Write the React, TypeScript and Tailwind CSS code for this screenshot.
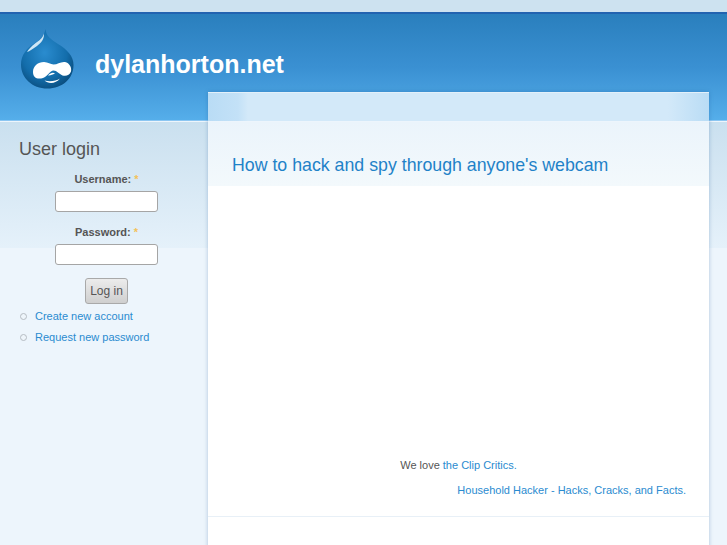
import React from "react";

function Logo() {
  return (
    <svg width="56" height="62" viewBox="19 27 56 62" className="shrink-0 mb-[12px]">
      <defs>
        <radialGradient id="d" cx="45%" cy="40%" r="65%">
          <stop offset="0%" stopColor="#2a8ccf" />
          <stop offset="65%" stopColor="#136dab" />
          <stop offset="100%" stopColor="#0a4c7c" />
        </radialGradient>
      </defs>
      <path d="M45.5 28 C46 35 51 38.5 58 43 C67 48.5 73.500 55 73.500 64 C73.500 78 62 87.500 47.500 87.500 C32 87.500 21 77 21 63.500 C21 54 27 47 34 42.500 C39.500 39 44 36 45.500 28 Z" fill="url(#d)" />
      <path d="M44 32.500 C43 37 38.500 40 35 42.500 C31 45.500 28.500 48.500 27 51 C29.500 50.500 33 47.500 37 45 C41 42 44.500 38 44 32.500 Z" fill="#cfe6f5" />
      <path d="M33 71 C33 65 38 61 44 61 C48 61 50.500 63.500 53.500 63.500 C57.500 63.500 60.500 60.500 65 61 C69.500 62 72 66.500 71 70.500 C69.500 74.500 66 75.500 62.500 74.500 C59 73 57 69.500 53.500 69.500 C50 69.500 47.500 75.500 43 77 C37.500 78.500 33 77 33 71 Z" fill="#ffffff" />
      <path d="M55 72.500 C53 71 50.500 72 48 74.500 C50.500 74.800 52.500 73.500 55 72.500 Z M44.500 79.500 C48 83 56 83 60 77.500 C56 80 50 81 44.500 79.500 Z" fill="#ffffff" />
    </svg>
  );
}

function Field({ label }: { label: string }) {
  return (
    <div className="flex flex-col items-center">
      <label className="text-[11px] leading-[14px] font-bold text-[#555]">
        {label}: <span className="text-[#f3c25a]">*</span>
      </label>
      <input
        type="text"
        className="mt-[5px] w-[103px] h-[21px] bg-white border-[1.5px] border-[#a5a5a5] rounded-[3px] outline-none"
      />
    </div>
  );
}

function LinkItem({ children }: { children: React.ReactNode }) {
  return (
    <li className="flex items-center h-[21px]">
      <span className="w-[7px] h-[7px] ml-[20px] mr-[8px] rounded-full border border-[#b5bcc2] bg-[#eef5fb]" />
      <a className="text-[11px] text-[#2a8bd0]">{children}</a>
    </li>
  );
}

export default function App() {
  return (
    <div className="w-[727px] h-[545px] overflow-hidden flex flex-col bg-[#edf5fc] font-['Liberation_Sans',Arial,sans-serif] text-[#555]">
      <div className="h-[12px] shrink-0 bg-[#cde2f0]" />
      <header className="h-[109px] shrink-0 flex items-center pl-[19px] pb-[5px] border-t-[2px] border-b-[1px] border-t-[#2263b0] border-b-[#8cc6f2] bg-[linear-gradient(180deg,#2a7fbd_0%,#3a90d2_50%,#55aeea_100%)]">
        <Logo />
        <h1 className="ml-[20px] text-[25px] leading-none font-bold text-white">dylanhorton.net</h1>
      </header>
      <div className="flex-1 flex border-t border-t-[#edf5fc] bg-[linear-gradient(180deg,#cae0ef_0%,#e5f1fa_100%)] bg-no-repeat bg-[length:100%_126px]">
        <aside className="w-[208px] shrink-0">
          <h2 className="ml-[19px] mt-[16px] text-[18px] leading-[22px] text-[#555]">User login</h2>
          <div className="mt-[12px] pl-[5px] flex flex-col gap-[13px]">
            <Field label="Username" />
            <Field label="Password" />
          </div>
          <div className="mt-[13px] pl-[5px] flex justify-center">
            <button className="w-[43px] h-[26px] text-[12px] text-[#555] border border-[#a9a9a9] rounded-[3px] bg-[linear-gradient(180deg,#ececec,#cfcfcf)]">
              Log in
            </button>
          </div>
          <ul className="mt-[2px]">
            <LinkItem>Create new account</LinkItem>
            <LinkItem>Request new password</LinkItem>
          </ul>
        </aside>
        <main className="w-[501px] shrink-0 -mt-[30px] h-[600px] bg-white shadow-[0_0_4px_rgba(20,80,140,0.3)] flex flex-col">
          <div className="h-[29px] shrink-0 border-t border-t-[#e3f0fa] bg-[linear-gradient(90deg,#b9dcf5_0px,#c3e1f7_30px,#d3e9f9_40px,#d3e9f9_460px,#b9dcf5_501px)]" />
          <div className="h-[65px] shrink-0 pl-[24px] pt-[32px] border-t border-t-[#edf5fc] bg-[linear-gradient(180deg,#ebf4fb,#f3f9fc)]">
            <h2 className="text-[17.75px] leading-[22px] text-[#1f82c8]">How to hack and spy through anyone's webcam</h2>
          </div>
          <div className="h-[331px] shrink-0 flex flex-col justify-end border-b border-b-[#e8f0f7] pb-[19px] text-[11px] leading-[14px]">
            <p className="text-center pb-[11px]">
              We love <a className="text-[#2a8bd0]">the Clip Critics.</a>
            </p>
            <p className="text-right pr-[23px]">
              <a className="text-[#2a8bd0]">Household Hacker - Hacks, Cracks, and Facts.</a>
            </p>
          </div>
        </main>
        <div className="flex-1" />
      </div>
    </div>
  );
}
